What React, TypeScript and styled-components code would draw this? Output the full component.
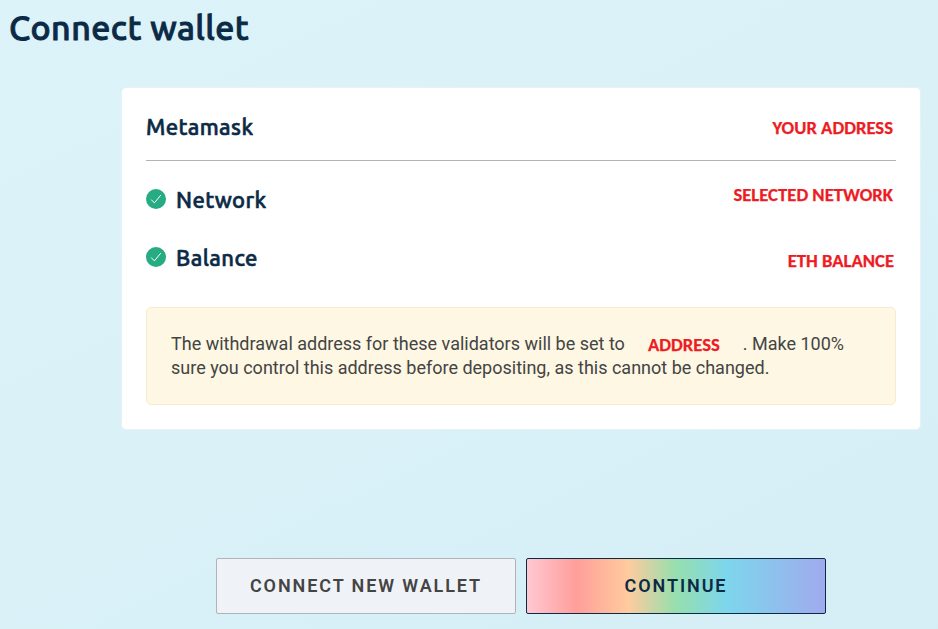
import React from 'react';
import styled, { createGlobalStyle } from 'styled-components';

const GlobalStyle = createGlobalStyle`
  * { box-sizing: border-box; }
  html, body { margin: 0; padding: 0; overflow: hidden; }
`;

const Page = styled.main`
  width: 938px;
  height: 629px;
  display: flex;
  flex-direction: column;
  overflow: hidden;
  font-family: Roboto, sans-serif;
  color: #444;
  background: linear-gradient(154deg, #dcf3f9 0%, #d9f1f7 50%, #d5edf5 100%);
`;

const Title = styled.h1`
  margin: 0;
  padding: 5px 0 0 9px;
  height: 87px;
  color: #0b2a46;
  font: 500 34px/44px Ubuntu, "Noto Sans", sans-serif;
  letter-spacing: 0.45px;
  -webkit-text-stroke: 0.9px #0b2a46;
  white-space: nowrap;
`;

const CheckIcon = styled.svg`
  display: block;
  flex: none;
  width: 20px;
  height: 20px;
`;

const Card = styled.section`
  width: 800px;
  height: 343px;
  margin-left: 121px;
  padding: 0 24px;
  display: flex;
  flex-direction: column;
  background: #fff;
  border: 1px solid #e8f1f6;
  border-radius: 5px;
`;

const Row = styled.div<{ $height: number; $top: number; $line?: boolean }>`
  flex: none;
  height: ${p => p.$height}px;
  padding-top: ${p => p.$top}px;
  display: flex;
  align-items: flex-start;
  justify-content: space-between;
  border-bottom: ${p => (p.$line ? '1px solid #b3b3b3' : 'none')};
`;

const Heading = styled.h2`
  margin: 0;
  display: flex;
  align-items: center;
  gap: 10px;
  color: #0b2a46;
  font: 500 22px/26px Ubuntu, "Noto Sans", sans-serif;
  letter-spacing: 0.4px;
  -webkit-text-stroke: 0.6px #0b2a46;
`;

const Label = styled.span`
  padding-top: 2px;
`;

const Placeholder = styled.span<{ $top?: number; $right?: number; $left?: number }>`
  margin: ${p => p.$top ?? 0}px ${p => p.$right ?? 0}px 0 ${p => p.$left ?? 0}px;
  color: #ed1c24;
  font: 700 18.67px/20px Carlito, "Open Sans", sans-serif;
  -webkit-text-stroke: 0.25px #ed1c24;
  white-space: nowrap;
`;

const Notice = styled.div`
  flex: none;
  margin-top: 19px;
  height: 98px;
  padding: 24px;
  border: 1px solid #faebcc;
  border-radius: 5px;
  background: #fdf7e3;
  font-size: 18px;
  line-height: 24px;
`;

const Line = styled.div`
  display: flex;
  height: 24px;
  white-space: nowrap;
`;

const Actions = styled.div`
  display: flex;
  gap: 10px;
  margin: 128px 0 0 216px;
`;

const Button = styled.button<{ $rainbow?: boolean }>`
  width: 300px;
  height: 56px;
  border: 1px solid ${p => (p.$rainbow ? '#0b2a46' : '#b3b3b3')};
  border-radius: 2px;
  background: ${p => (p.$rainbow ? 'linear-gradient(90deg,#ffc8d3,#ff9e9a 16.5%,#ffcb9e 34%,#96dfae 50%,#7dd6ec 67%,#a0aaee)' : '#eff3f8')};
  color: ${p => (p.$rainbow ? '#0b2a46' : '#444')};
  font: 600 18px/24px Roboto, sans-serif;
  letter-spacing: 1.9px;
`;

const Check = () => (
  <CheckIcon viewBox="0 0 20 20">
    <circle cx="10" cy="10" r="10" fill="#26ab83" />
    <path d="M5.2 10.6l3.2 3.3 6.4-7.8" fill="none" stroke="#fff" strokeWidth="1" />
  </CheckIcon>
);

export default function App() {
  return (
    <>
      <GlobalStyle />
      <Page>
        <Title>Connect wallet</Title>
        <Card>
          <Row $height={73} $top={24} $line>
            <Heading><Label>Metamask</Label></Heading>
            <Placeholder $top={6} $right={3}>YOUR ADDRESS</Placeholder>
          </Row>
          <Row $height={76} $top={24}>
            <Heading><Check /><Label>Network</Label></Heading>
            <Placeholder $top={0} $right={3}>SELECTED NETWORK</Placeholder>
          </Row>
          <Row $height={51} $top={6}>
            <Heading><Check /><Label>Balance</Label></Heading>
            <Placeholder $top={8} $right={2}>ETH BALANCE</Placeholder>
          </Row>
          <Notice>
            <Line>
              <span>The withdrawal address for these validators will be set to</span>
              <Placeholder $top={3} $left={23} $right={23}>ADDRESS</Placeholder>
              <span>. Make 100%</span>
            </Line>
            <Line>sure you control this address before depositing, as this cannot be changed.</Line>
          </Notice>
        </Card>
        <Actions>
          <Button>CONNECT NEW WALLET</Button>
          <Button $rainbow>CONTINUE</Button>
        </Actions>
      </Page>
    </>
  );
}
